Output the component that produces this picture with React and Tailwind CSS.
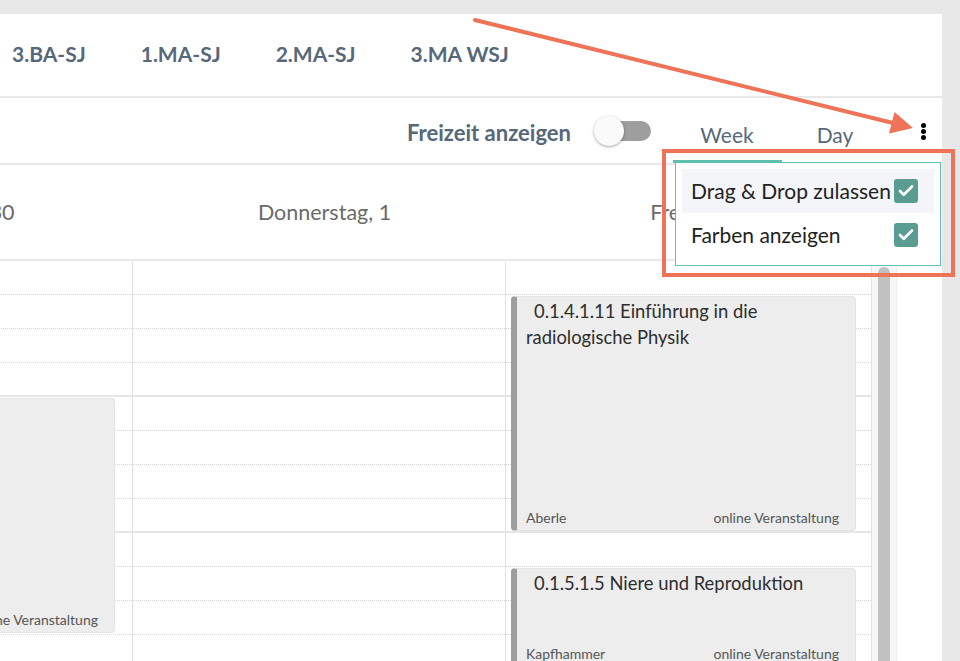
import { Check } from 'lucide-react'

const tabs = ['3.BA-SJ', '1.MA-SJ', '2.MA-SJ', '3.MA WSJ']

const QUARTER = 34
const QUARTERS = 12

const days = [
    {
        label: 'Mittwoch, 30',
        width: 'w-[373px] ml-[-240px]',
        inset: 'left-[5px] right-[17px]',
        events: [
            { start: 4, span: 7, title: '0.1.3.2 Anatomie', person: 'Müller', place: 'online Veranstaltung' },
        ],
    },
    { label: 'Donnerstag, 1', width: 'w-[373px]', inset: 'left-[5px] right-[15px]', events: [] },
    {
        label: 'Freitag, 2',
        width: 'w-[366px]',
        inset: 'left-[5px] right-[15px]',
        events: [
            { start: 1, span: 7, title: '0.1.4.1.11 Einführung in die radiologische Physik', person: 'Aberle', place: 'online Veranstaltung' },
            { start: 9, span: 3, title: '0.1.5.1.5 Niere und Reproduktion', person: 'Kapfhammer', place: 'online Veranstaltung' },
        ],
    },
]

function Toggle() {
    return (
        <div className="relative w-[57px] h-[30px] shrink-0">
            <div className="absolute left-[7px] right-0 top-[5px] h-[20px] rounded-full bg-[#9e9e9e]" />
            <div className="absolute left-0 top-0 w-[30px] h-[30px] rounded-full bg-[#fafafa] shadow-[0_1px_3px_rgba(0,0,0,0.35)]" />
        </div>
    )
}

function CheckBox() {
    return (
        <div className="w-[24px] h-[24px] rounded-[3px] bg-[#5b9c92] flex items-center justify-center shrink-0">
            <Check className="w-[18px] h-[18px] text-white" strokeWidth={3.5} />
        </div>
    )
}

function Event({ ev, inset }) {
    return (
        <div
            className={`absolute ${inset} bg-[#ededed] border border-[#e4e4e4] border-l-[6px] border-l-[#9e9e9e] rounded-[4px] flex flex-col justify-between pl-[9px] pr-[16px] overflow-hidden`}
            style={{ top: ev.start * QUARTER + 1, height: ev.span * QUARTER - 3 }}
        >
            <p className="text-[18.4px] leading-[26px] text-[#2e2e2e] indent-[8px] pt-[1px]">{ev.title}</p>
            <div className="flex justify-between text-[14px] leading-[18px] text-[#555] pb-[3px]">
                <span>{ev.person}</span>
                <span>{ev.place}</span>
            </div>
        </div>
    )
}

export default function App() {
    return (
        <div className="relative w-[960px] h-[661px] overflow-hidden bg-[#e8e8e8] pt-[14px] font-['Lato',sans-serif]">
            <div className="w-[942px] h-full bg-white flex flex-col overflow-hidden">
                {/* course tabs */}
                <div className="h-[84px] shrink-0 flex items-center gap-[55px] pl-[12px] border-b-2 border-[#e9e9e9] pb-[2px]">
                    {tabs.map(t => (
                        <span key={t} className="text-[21px] font-bold text-[#56687a]">{t}</span>
                    ))}
                </div>

                {/* toolbar */}
                <div className="h-[67px] shrink-0 flex items-center justify-end border-b-2 border-[#e9e9e9]">
                    <span className="text-[22px] font-bold text-[#56687a] pt-[3px]">Freizeit anzeigen</span>
                    <div className="ml-[23px]"><Toggle /></div>
                    <div className="ml-[22px] flex h-full">
                        <div className="w-[108px] h-full flex items-center justify-center border-b-[3px] border-[#5cbfb1] pt-[11px] text-[21px] text-[#56687a]">Week</div>
                        <div className="w-[108px] h-full flex items-center justify-center border-b-[3px] border-transparent pt-[11px] text-[21px] text-[#56687a]">Day</div>
                    </div>
                    <div className="ml-[22px] mr-[7px] w-[24px] flex flex-col items-center gap-[1px] pt-[1px]">
                        <span className="w-[5px] h-[5px] rounded-full bg-black" />
                        <span className="w-[5px] h-[5px] rounded-full bg-black" />
                        <span className="w-[5px] h-[5px] rounded-full bg-black" />
                    </div>
                </div>

                {/* day headers */}
                <div className="h-[96px] shrink-0 flex border-b-2 border-[#e9e9e9]">
                    {days.map(d => (
                        <div key={d.label} className={`${d.width} shrink-0 flex items-center justify-center pl-[10px] text-[21.5px] text-[#6a6a6a]`}>
                            {d.label}
                        </div>
                    ))}
                </div>

                {/* body */}
                <div className="flex-1 flex">
                    {days.map(d => (
                        <div key={d.label} className={`${d.width} shrink-0 relative border-r border-[#e2e2e2]`}>
                            {Array.from({ length: QUARTERS }).map((_, i) => (
                                <div
                                    key={i}
                                    className={(i + 1) % 4 === 0
                                        ? 'h-[34px] border-b-2 border-[#e6e6e6]'
                                        : 'h-[34px] border-b border-dotted border-[#d4d4d4]'}
                                />
                            ))}
                            {d.events.map(ev => (
                                <Event key={ev.title} ev={ev} inset={d.inset} />
                            ))}
                        </div>
                    ))}
                    <div className="w-[25px] shrink-0 bg-[#f6f6f6] border-r border-[#eeeeee] flex justify-center pt-[6px]">
                        <div className="w-[12px] h-full rounded-t-full bg-[#c1c1c1]" />
                    </div>
                    <div className="flex-1 bg-white" />
                </div>
            </div>

            {/* settings menu */}
            <div className="absolute left-[675px] top-[162px] w-[266px] h-[104px] bg-white border border-[#63c0b3] p-[6px] flex flex-col text-[21px] text-[#222] whitespace-nowrap">
                <div className="absolute left-[-2px] top-[-3px] w-[108px] h-[3px] bg-[#5cbfb1]" />
                <div className="h-[44px] flex items-center justify-between bg-[#f4f5f8] pl-[9px] pr-[16px]">
                    <span>Drag &amp; Drop zulassen</span>
                    <CheckBox />
                </div>
                <div className="h-[44px] flex items-center justify-between pl-[9px] pr-[16px]">
                    <span>Farben anzeigen</span>
                    <CheckBox />
                </div>
            </div>

            {/* annotation */}
            <div className="absolute left-[662px] top-[149px] w-[293px] h-[128px] border-4 border-[#ee7357] pointer-events-none" />
            <svg className="absolute inset-0 pointer-events-none" width="960" height="661">
                <line x1="475" y1="20" x2="893" y2="123" stroke="#ee7357" strokeWidth="4" strokeLinecap="round" />
                <polygon points="913,128 889,133.5 894.5,112" fill="#ee7357" />
            </svg>
        </div>
    )
}
